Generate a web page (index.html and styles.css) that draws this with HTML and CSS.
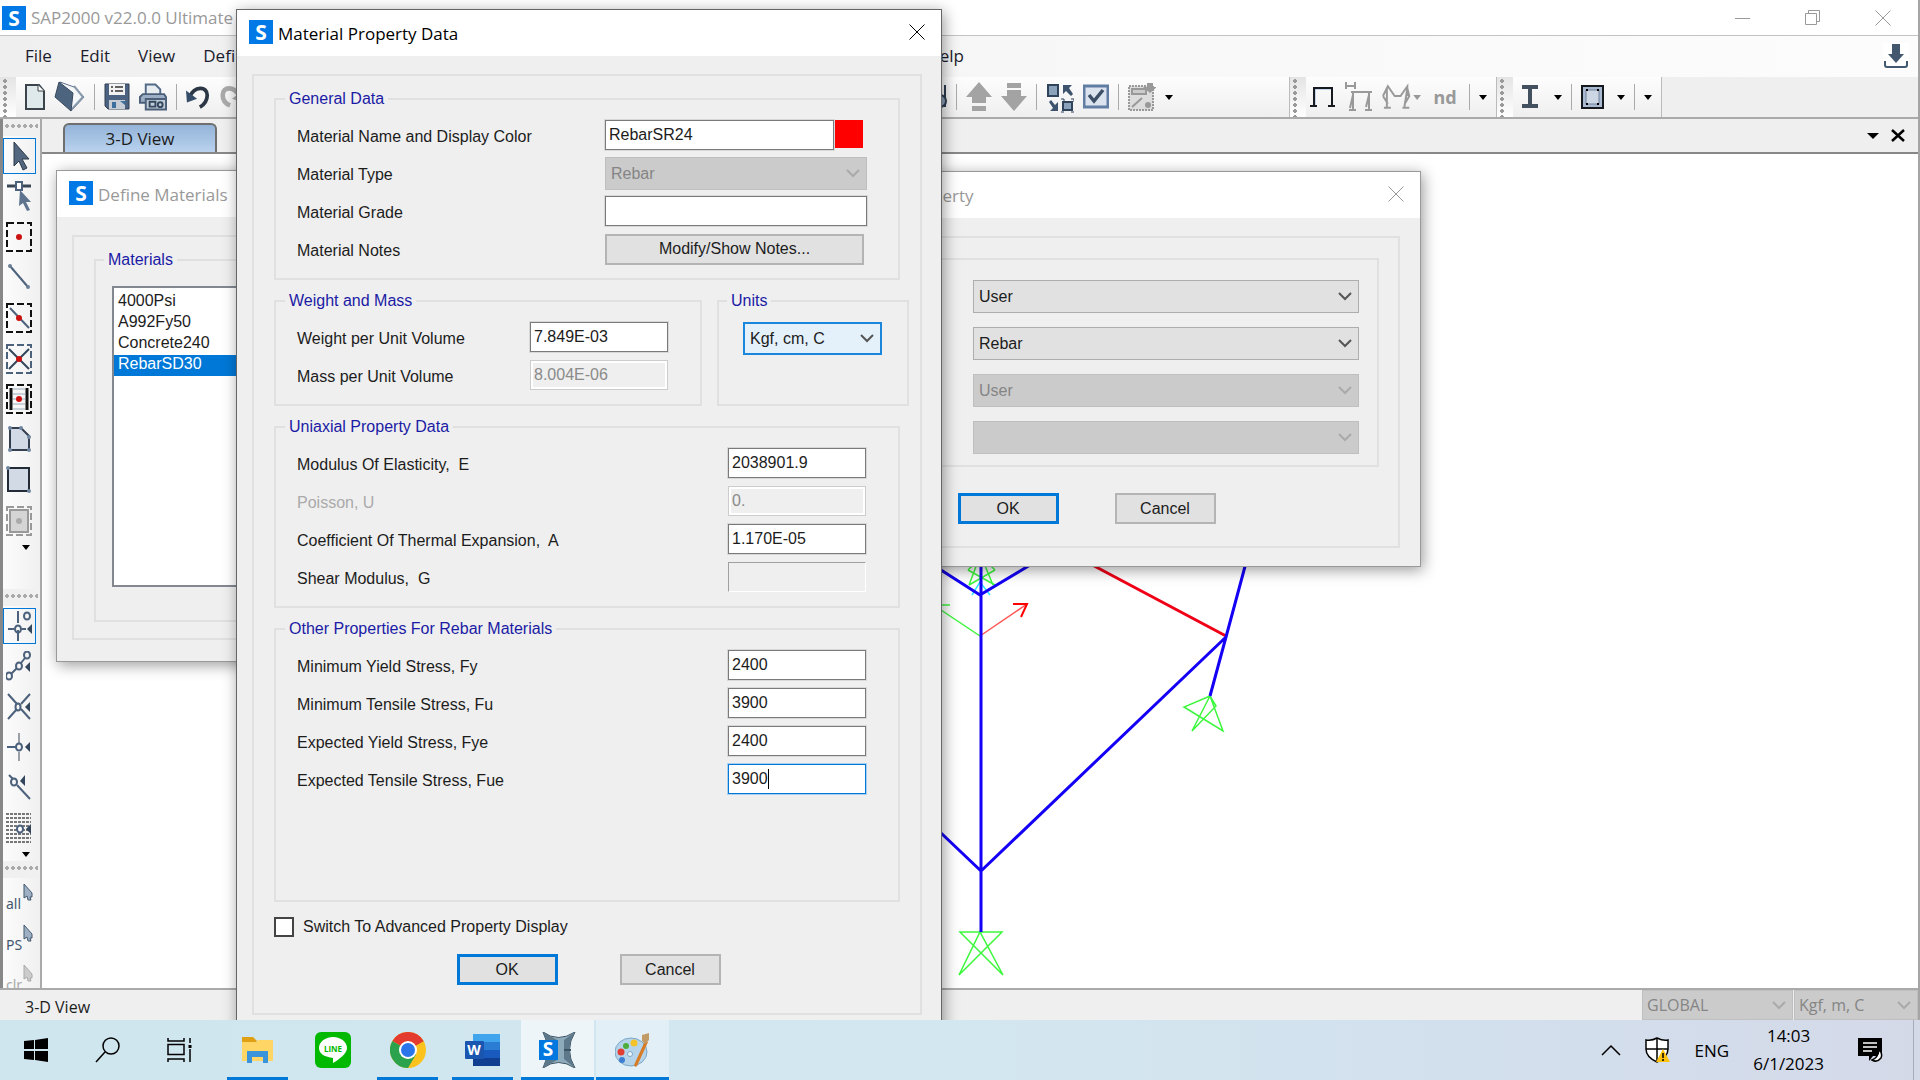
FILE: index.html
```html
<!DOCTYPE html>
<html lang="en">
<head>
<meta charset="utf-8">
<title>SAP2000 v22.0.0 Ultimate</title>
<link rel="stylesheet" href="styles.css">
</head>
<body>
  <div class="desktop">
    <section class="app">
      <header class="app-title">
        <span class="logo">S</span>
        <h1>SAP2000 v22.0.0 Ultimate</h1>
        <div class="window-buttons">
          <button aria-label="Minimize"><svg width="16" height="16"><path d="M0 8.5h15" /></svg></button>
          <button aria-label="Restore"><svg width="16" height="16"><path d="M.5 3.5h11v11H.5zM3.5 3V.5h11v11H12" /></svg></button>
          <button aria-label="Close"><svg width="16" height="16"><path d="M0.5 0.5l15 15M15.5 0.5l-15 15" /></svg></button>
        </div>
      </header>

      <nav class="menu">
        <a href="#">File</a>
        <a href="#">Edit</a>
        <a href="#">View</a>
        <a href="#">Define</a>
        <a href="#" class="menu-help">Help</a>
        <button class="download" aria-label="Download">
          <svg width="26" height="26"><path d="M9 1h8v10h4l-8 9-8-9h4z" fill="#43586f" /><path d="M2 18v4q0 2 2 2h18q2 0 2-2v-4" fill="none" stroke="#43586f" stroke-width="2" /></svg>
        </button>
      </nav>

      <div class="toolbars">
        <div class="strip strip-main">
          <span class="grip"></span>
          <button aria-label="New"><svg width="20" height="28" viewBox="0 0 20 28"><path d="M1 2h13l5 6v18H1z" fill="#dfe9ec" stroke="#3b444b" stroke-width="2" /><path d="M13 2v6h6" fill="#fff" stroke="#3b444b" /></svg></button>
          <button aria-label="Open"><svg width="31" height="32" viewBox="0 0 31 32"><path d="M6 1l14 5 10 10-13 14z" fill="#f4f7fa" stroke="#5a6f88" /><path d="M20 5l9 11-12 13" fill="none" stroke="#8798ab" stroke-width="2" /><path d="M5 1l14 11-2 18L1 16z" fill="#4d647f" stroke="#38495e" /></svg></button>
          <i class="sep"></i>
          <button aria-label="Save"><svg width="26" height="28" viewBox="0 0 26 28"><path d="M1 1h24v25H4l-3-3z" fill="#4b6280" stroke="#303f50" /><path d="M5 1h16v11H5z" fill="#f2f2f2" /><path d="M11 4h8M11 8h8M7 4h2M7 8h2" stroke="#333" stroke-width="1.5" /><path d="M5 17h16v9H5z" fill="#c6cdd5" /><path d="M8 19h4v6H8zM16 18h5v4z" fill="#3c6f9e" /></svg></button>
          <button aria-label="Print"><svg width="28" height="32" viewBox="0 0 29 32"><path d="M7 14V3h10l5 5v6" fill="#e7ecf1" stroke="#526a86" stroke-width="2" /><path d="M1 22v-6l3-3h22l2 3v6z" fill="#9baec3" stroke="#4b6078" stroke-width="2" /><path d="M7 18h21v11H7z" fill="#c2ccd6" stroke="#4b6078" stroke-width="2" /><path d="M11 21h6v5h-6z" fill="none" stroke="#33485f" stroke-width="2" /><circle cx="22" cy="24" r="2.500" fill="none" stroke="#33485f" stroke-width="2" /></svg></button>
          <i class="sep"></i>
          <button aria-label="Undo"><svg width="24" height="26" viewBox="0 0 26 28"><path d="M4 14C9 2 23 2 23 12q0 8-8 13" fill="none" stroke="#2b3744" stroke-width="4" /><path d="M0 7l1 13 11-4z" fill="#354d68" /></svg></button>
          <button aria-label="Redo"><svg width="24" height="26" viewBox="0 0 26 28"><path d="M22 13C17 2 4 2 4 12q0 8 8 11" fill="none" stroke="#aaa" stroke-width="5" /><path d="M26 7l-1 13-11-4z" fill="#aaa" /></svg></button>
          <div class="strip-right">
            <button aria-label="Object view"><svg width="20" height="28" viewBox="0 0 20 28"><path d="M18 2v22" stroke="#2d3d50" stroke-width="2" /><circle cx="13" cy="18" r="6" fill="#8fa3bb" stroke="#2d3d50" stroke-width="2" /></svg></button>
            <i class="sep"></i>
            <button aria-label="Move up"><svg width="26" height="32" viewBox="0 0 26 32" fill="#a3a3a3"><path d="M13 1l13 15h-6v6H6v-6H0zM6 25h14v5H6z" /></svg></button>
            <button aria-label="Move down"><svg width="26" height="32" viewBox="0 0 26 32" fill="#a3a3a3"><path d="M6 2h14v5H6zM6 9h14v6h6L13 30 0 15h6z" /></svg></button>
            <i class="sep"></i>
            <button aria-label="Shrink objects"><svg width="28" height="32" viewBox="0 0 28 32"><path d="M2 4h10v11H2zM17 21h9v8h-9z" fill="#8ba2bd" stroke="#2f435a" stroke-width="2" /><path d="M15 18h3v3M25 18h3v3M15 31h3M25 31h3" stroke="#2f435a" fill="none" /><path d="M17 4h9l-3 3 4 6-2 2-5-5-3 3zM12 30H4l3-3-4-6 2-2 4 5 3-3z" fill="#3d536d" /></svg></button>
            <button aria-label="Set display options"><svg width="26" height="26" viewBox="0 0 26 26"><path d="M1 2h24v21H1z" fill="#dbe3ee" stroke="#617da4" stroke-width="3" /><path d="M6 11l5 6 9-11" fill="none" stroke="#3c4f66" stroke-width="3.500" /></svg></button>
            <i class="sep"></i>
            <button aria-label="Assign to group"><svg width="28" height="30" viewBox="0 0 28 30"><path d="M1 4h24v24H1z" fill="#ddd" stroke="#999" stroke-width="2" stroke-dasharray="2 1" /><path d="M4 7h14v5H4z" fill="#ccc" stroke="#999" stroke-width="2" /><path d="M4 25l10-9" stroke="#999" stroke-width="2" /><path d="M19 1h6v4h4l-7 6-7-6h4z" fill="#999" /><circle cx="20" cy="23" r="3" fill="#999" /></svg></button>
            <button aria-label="More"><svg width="8" height="5"><path d="M0 0h8L4 5z" /></svg></button>
          </div>
        </div>
        <div class="strip">
          <span class="grip"></span>
          <button aria-label="Undeformed shape"><svg width="26" height="24" viewBox="0 0 26 24"><path d="M5 20V4h17v16" fill="none" stroke="#8eb4df" /><path d="M0 21h7M18 21h7M4 21V3h18v18" fill="none" stroke="#171b20" stroke-width="2" /></svg></button>
          <button aria-label="Show loads"><svg width="28" height="32" viewBox="0 0 28 32" fill="none" stroke="#999" stroke-width="2"><path d="M1 1v7M10 1v7M1 5h9M6 11h21M8 11v17M4 29h7M8 14l-3 13M24 11v17M20 29h7M24 14l-3 12" /></svg></button>
          <button aria-label="Deformed shape"><svg width="39" height="28" viewBox="0 0 40 28"><path d="M1 13L6 3l7 10h6l7-10v10M5 5v19M2 25h7M26 5l-3 19M21 25h7M1 13l5 8M26 5l2 8-4 7" fill="none" stroke="#999" stroke-width="2" /><path d="M32 12h8l-4 5z" fill="#999" /></svg></button>
          <button class="nd">nd</button>
          <i class="sep"></i>
          <button aria-label="More"><svg width="8" height="5"><path d="M0 0h8L4 5z" /></svg></button>
        </div>
        <div class="strip">
          <span class="grip"></span>
          <button class="frame-button" aria-label="Frame section"><svg width="40" height="24" viewBox="0 0 40 24"><path d="M0 2h16M0 21h16M8 2v19" stroke="#43505f" stroke-width="4" /><path d="M32 10h8l-4 5z" /></svg></button>
          <i class="sep"></i>
          <button aria-label="Concrete section"><svg width="44" height="26" viewBox="0 0 44 26"><path d="M1 2h21v22H1z" fill="#a9bad2" stroke="#15191e" stroke-width="2" /><path d="M5 6h13v14H5z" fill="#ccd6e4" stroke="#71839b" /><path d="M5 5h2v2H5zM16 5h2v2h-2zM5 19h2v2H5zM16 19h2v2h-2zM36 11h8l-4 5z" /></svg></button>
          <i class="sep"></i>
          <button aria-label="More"><svg width="8" height="5"><path d="M0 0h8L4 5z" /></svg></button>
        </div>
      </div>

      <div class="work">
        <aside class="side">
          <span class="side-grip"></span>
          <div class="side-group side-draw">
            <button class="on" aria-label="Select"><svg width="26" height="30" viewBox="0 0 26 30"><path d="M7 1l15 17h-7l5 9-4 2-4-9-5 5z" fill="#52667f" stroke="#2d3a4a" /></svg></button>
            <button aria-label="Reshape"><svg width="26" height="30" viewBox="0 0 26 30"><path d="M1 5h24" stroke="#3a4655" stroke-width="3" /><path d="M10 1h6v8h-6z" fill="#fff" stroke="#4c617b" stroke-width="2" /><path d="M14 9l11 12h-5l4 8-3 1-4-8-4 3z" fill="#5d738e" /></svg></button>
            <button aria-label="Draw joint"><svg width="26" height="30" viewBox="0 0 26 30"><path d="M1 1h24v28H1z" class="dash" /><circle cx="13" cy="15" r="3" fill="#c11" /></svg></button>
            <button aria-label="Draw frame"><svg width="26" height="30" viewBox="0 0 26 30"><path d="M4 4l18 21" stroke="#4c617b" stroke-width="2" /><circle cx="4" cy="4" r="2" fill="#6b7f98" /><circle cx="22" cy="25" r="2" fill="#6b7f98" /></svg></button>
            <button aria-label="Quick draw frame"><svg width="26" height="30" viewBox="0 0 26 30"><path d="M1 1h24v28H1z" class="dash" /><path d="M4 5l19 20" stroke="#4c617b" stroke-width="2" /><circle cx="13" cy="15" r="3" fill="#c11" /></svg></button>
            <button aria-label="Quick draw braces"><svg width="26" height="30" viewBox="0 0 26 30"><path d="M1 1h24v28H1z" class="dash blue" /><path d="M3 5l20 20M23 5L3 25" stroke="#33465c" stroke-width="2" /><circle cx="13" cy="15" r="3" fill="#c11" /></svg></button>
            <button aria-label="Quick draw beams"><svg width="26" height="30" viewBox="0 0 26 30"><path d="M1 1h24v28H1z" class="dash" /><path d="M5 4v22M21 4v22" stroke="#111" stroke-width="3" /><path d="M7 5h12M7 10h12M7 15h12M7 20h12M7 25h12" stroke="#9aaabd" /><circle cx="13" cy="15" r="3" fill="#c11" /></svg></button>
            <button aria-label="Draw poly area"><svg width="26" height="30" viewBox="0 0 26 30"><path d="M4 3h11l8 8v14H4z" fill="#d2dae5" stroke="#333f4e" stroke-width="2" /><g fill="#71869f"><circle cx="4" cy="3" r="2" /><circle cx="15" cy="3" r="2" /><circle cx="23" cy="12" r="2" /><circle cx="4" cy="25" r="2" /><circle cx="23" cy="25" r="2" /></g></svg></button>
            <button aria-label="Draw rectangle"><svg width="26" height="30" viewBox="0 0 26 30"><path d="M2 3h21v23H2z" fill="#d2dae5" stroke="#222b36" stroke-width="2" /><circle cx="2" cy="3" r="2" fill="#71869f" /><circle cx="23" cy="26" r="2" fill="#71869f" /></svg></button>
            <button aria-label="Quick draw area"><svg width="26" height="30" viewBox="0 0 26 30"><path d="M1 1h24v28H1z" class="dash gray" /><path d="M4 4h18v22H4z" fill="#d5d5d5" stroke="#999" stroke-width="2" /><circle cx="13" cy="15" r="3" fill="#aaa" /></svg></button>
          </div>
          <button class="side-more" aria-label="More"><svg width="8" height="5"><path d="M0 0h8L4 5z" /></svg></button>
          <span class="side-grip side-gap"></span>
          <div class="side-group side-snap">
            <button class="on" aria-label="Snap to points"><svg width="26" height="30" viewBox="0 0 26 30" class="snap"><path d="M11 0v12M11 19v11M1 18h6M15 18h4" /><ellipse cx="11" cy="18" rx="3" ry="3.500" /><ellipse cx="20" cy="5" rx="3" ry="3.500" /><path d="M25 13v10l-5-5z" class="tip" /></svg></button>
            <button aria-label="Snap to ends"><svg width="26" height="30" viewBox="0 0 26 30" class="snap"><path d="M5 23l6-6M15 12l4-5" /><ellipse cx="3" cy="25" rx="3" ry="3.500" /><ellipse cx="13" cy="15" rx="3" ry="3.500" /><ellipse cx="21" cy="4" rx="3" ry="3.500" /><path d="M24 11v10l-5-5z" class="tip" /></svg></button>
            <button aria-label="Snap to intersections"><svg width="26" height="30" viewBox="0 0 26 30" class="snap"><path d="M2 2l9 10M15 17l9 10M24 2l-9 10M11 17L2 27" /><ellipse cx="12" cy="15" rx="2.500" ry="3.500" /><path d="M24 10v10l-5-5z" class="tip" /></svg></button>
            <button aria-label="Snap to perpendicular"><svg width="26" height="30" viewBox="0 0 26 30" class="snap"><path d="M13 1v10M13 20v9" stroke="#9aa0a6" /><path d="M1 15h10" /><ellipse cx="13" cy="15" rx="3" ry="3.500" /><path d="M24 10v10l-5-5z" class="tip" /></svg></button>
            <button aria-label="Snap to lines"><svg width="26" height="30" viewBox="0 0 26 30" class="snap"><path d="M3 3l4 4M11 13l13 14" /><ellipse cx="8" cy="10" rx="3" ry="3.500" /><path d="M19 3v11l-5-5z" class="tip" /></svg></button>
            <button aria-label="Snap to fine grid"><svg width="26" height="30" viewBox="0 0 26 30" class="snap"><path d="M0 1h25M0 5h25M0 9h25M0 13h25M0 17h25M0 21h25M0 25h25M0 29h25" stroke="#777" stroke-dasharray="3 1" /><ellipse cx="14" cy="16" rx="3" ry="3.500" fill="#fff" /><path d="M25 11v10l-5-5z" class="tip" /></svg></button>
          </div>
          <button class="side-more" aria-label="More"><svg width="8" height="5"><path d="M0 0h8L4 5z" /></svg></button>
          <span class="side-grip"></span>
          <div class="side-group side-select">
            <button>all<svg width="10" height="18" viewBox="0 0 10 18"><path d="M1 1l8 9v4H7l1 3H5l-1-4-3 2z" fill="#9fb0c4" stroke="#43586f" /></svg></button>
            <button>PS<svg width="10" height="18" viewBox="0 0 10 18"><path d="M1 1l8 9v4H7l1 3H5l-1-4-3 2z" fill="#9fb0c4" stroke="#43586f" /></svg></button>
            <button disabled>clr<svg width="10" height="18" viewBox="0 0 10 18"><path d="M1 1l8 9v4H7l1 3H5l-1-4-3 2z" fill="#ccc" stroke="#aaa" /></svg></button>
          </div>
        </aside>

        <main class="view">
          <div class="tabs">
            <button class="tab">3-D View</button>
            <div class="tab-tools">
              <button aria-label="View list"><svg width="12" height="6"><path d="M0 0h12L6 6z" /></svg></button>
              <button aria-label="Close view"><svg width="14" height="13"><path d="M1 1l12 11M13 1L1 12" stroke="#000" stroke-width="2.500" /></svg></button>
            </div>
          </div>
          <svg class="model">
            <g transform="translate(-42 -154)" fill="none">
              <g stroke="#3cf73c" stroke-width="1.500">
                <path d="M968 570l27 15M995 570l-26 15M968 570l8-8M995 570l-8-8M980 556l-11 29M981 556l12 29" />
                <path d="M980 636l-39-26M932 605h18" />
                <path d="M960 932h42l-43 43 21-43 23 43z" />
                <path d="M1210 696l-26 11 39 24-13-35-18 35 24-25z" />
              </g>
              <path d="M972 595l8-13 10 13" stroke="#2ee6ff" stroke-width="1.500" />
              <path d="M980 636l47-32" stroke="#f55" stroke-width="1.500" />
              <path d="M1013 604h14l-6 13" stroke="#f00" stroke-width="2" />
              <path d="M1083 560l143 76" stroke="#f00016" stroke-width="3" />
              <path d="M941 570l39 25 60-36M1247 559l-21 78-16 59M1226 637L981 871l-40-38M981 559v373" stroke="#1400f5" stroke-width="3" />
            </g>
          </svg>
        </main>
      </div>

      <footer class="status">
        <span>3-D View</span>
        <div class="status-selects">
          <select disabled aria-label="Coordinate system"><option>GLOBAL</option></select>
          <select disabled aria-label="Units"><option>Kgf, m, C</option></select>
        </div>
      </footer>
    </section>

    <section class="dialog define-materials">
      <header class="dialog-title"><span class="logo">S</span><h2>Define Materials</h2></header>
      <div class="panel">
        <fieldset>
          <legend>Materials</legend>
          <select size="14" class="list" aria-label="Materials">
            <option>4000Psi</option>
            <option>A992Fy50</option>
            <option>Concrete240</option>
            <option selected>RebarSD30</option>
          </select>
        </fieldset>
      </div>
    </section>

    <section class="dialog add-property">
      <header class="dialog-title">
        <span class="logo">S</span><h2>Add Material Property</h2>
        <button aria-label="Close"><svg width="16" height="16"><path d="M0.5 0.5l15 15M15.5 0.5l-15 15" /></svg></button>
      </header>
      <div class="panel">
        <div class="choices">
          <select aria-label="Region"><option>User</option></select>
          <select aria-label="Material type"><option>Rebar</option></select>
          <select aria-label="Standard" disabled><option>User</option></select>
          <select aria-label="Grade" disabled><option></option></select>
        </div>
        <div class="actions">
          <button class="btn default">OK</button>
          <button class="btn">Cancel</button>
        </div>
      </div>
    </section>

    <section class="dialog property-data">
      <header class="dialog-title">
        <span class="logo">S</span><h2>Material Property Data</h2>
        <button aria-label="Close"><svg width="16" height="16"><path d="M0.5 0.5l15 15M15.5 0.5l-15 15" /></svg></button>
      </header>
      <form class="panel">
        <fieldset class="rows wide">
          <legend>General Data</legend>
          <label for="name">Material Name and Display Color</label>
          <div class="name-field">
            <input type="text" id="name" value="RebarSR24">
            <button type="button" class="swatch" aria-label="Display color"></button>
          </div>
          <label for="type">Material Type</label>
          <select id="type" disabled><option>Rebar</option></select>
          <label for="grade">Material Grade</label>
          <input type="text" id="grade">
          <label for="notes">Material Notes</label>
          <button type="button" class="btn notes" id="notes">Modify/Show Notes...</button>
        </fieldset>

        <div class="pair">
          <fieldset class="rows">
            <legend>Weight and Mass</legend>
            <label for="weight">Weight per Unit Volume</label>
            <input type="text" id="weight" value="7.849E-03">
            <label for="mass">Mass per Unit Volume</label>
            <input type="text" id="mass" value="8.004E-06" disabled>
          </fieldset>
          <fieldset class="units">
            <legend>Units</legend>
            <select aria-label="Units" class="active"><option>Kgf, cm, C</option></select>
          </fieldset>
        </div>

        <fieldset class="rows">
          <legend>Uniaxial Property Data</legend>
          <label for="modulus">Modulus Of Elasticity,&nbsp; E</label>
          <input type="text" id="modulus" value="2038901.9">
          <label for="poisson" class="off">Poisson, U</label>
          <input type="text" id="poisson" value="0." disabled>
          <label for="thermal">Coefficient Of Thermal Expansion,&nbsp; A</label>
          <input type="text" id="thermal" value="1.170E-05">
          <label for="shear">Shear Modulus,&nbsp; G</label>
          <input type="text" id="shear" class="sunken" readonly>
        </fieldset>

        <fieldset class="rows tall">
          <legend>Other Properties For Rebar Materials</legend>
          <label for="fy">Minimum Yield Stress, Fy</label>
          <input type="text" id="fy" value="2400">
          <label for="fu">Minimum Tensile Stress, Fu</label>
          <input type="text" id="fu" value="3900">
          <label for="fye">Expected Yield Stress, Fye</label>
          <input type="text" id="fye" value="2400">
          <label for="fue">Expected Tensile Stress, Fue</label>
          <div class="caret-field">
            <input type="text" id="fue" class="active" value="3900">
            <i class="caret"></i>
          </div>
        </fieldset>

        <label class="check"><input type="checkbox"> Switch To Advanced Property Display</label>
        <div class="actions">
          <button type="button" class="btn default">OK</button>
          <button type="button" class="btn">Cancel</button>
        </div>
      </form>
    </section>
  </div>

  <footer class="taskbar">
    <button class="sys" aria-label="Start"><svg width="24" height="24"><path d="M0 3l10-1v9H0zM11 2l13-2v11H11zM0 13h10v9L0 21zM11 13h13v11l-13-2z" /></svg></button>
    <button class="sys" aria-label="Search"><svg width="26" height="26" fill="none" stroke="#000" stroke-width="1.500"><circle cx="16" cy="9" r="8" /><path d="M10 15L1 25" /></svg></button>
    <button class="sys" aria-label="Task view"><svg width="26" height="26" fill="none" stroke="#000" stroke-width="1.500"><path d="M1 1v3h16V1M1 7.500h16v10H1zM1 25v-3h16v3M23 1v5M23 12v13" /><path d="M21.500 8h3v3h-3z" fill="#000" stroke="none" /></svg></button>
    <div class="tasks">
      <button class="task open" aria-label="File Explorer"><svg width="34" height="28" viewBox="0 0 34 28"><path d="M1 1h11l4 4v5H1z" fill="#e0a013" /><path d="M1 6h14l2-2h15v21H1z" fill="#ffd566" /><path d="M6 15h21v12h-5v-6H11v6H6z" fill="#3a94dc" /><path d="M11 21h11v4H11z" fill="#ffd566" /></svg></button>
      <button class="task" aria-label="LINE"><svg width="36" height="36" viewBox="0 0 36 36"><rect width="36" height="36" rx="6" fill="#00b900" /><path d="M18 5c8 0 14 5 14 11 0 5-7 11-14 15v-5C10 25 4 22 4 16S10 5 18 5z" fill="#fff" /><text x="18" y="20" class="line-text">LINE</text></svg></button>
      <button class="task open" aria-label="Chrome"><svg width="36" height="36" viewBox="0 0 36 36"><circle cx="18" cy="18" r="18" fill="#fcc31e" /><path d="M18 18L2.400 9A18 18 0 0 1 33.600 9z" fill="#e33b2e" /><path d="M18 18L2.400 9A18 18 0 0 0 18 36l8-13.500z" fill="#2ba24c" /><path d="M18 9h15.600L18 18z" fill="#e33b2e" /><circle cx="18" cy="18" r="9" fill="#fff" /><circle cx="18" cy="18" r="7" fill="#2a75ea" /></svg></button>
      <button class="task open" aria-label="Word"><svg width="36" height="32" viewBox="0 0 36 32"><path d="M8 0h27v8H8z" fill="#41a5ee" /><path d="M8 8h27v8H8z" fill="#2b7cd3" /><path d="M8 16h27v8H8z" fill="#185abd" /><path d="M8 24h27v8H8z" fill="#103f91" /><rect y="7" width="19" height="18" rx="1" fill="#1a55b0" /><text x="9" y="21" class="word-text">W</text></svg></button>
      <button class="task current" aria-label="SAP2000"><svg width="38" height="36" viewBox="0 0 38 36"><path d="M4 0q15 11 32 0-11 18 0 36-17-11-32 0 9-18 0-36z" fill="#8eabbc" stroke="#3c5363" /><path d="M4 0l14 8v20L4 36q8-18 0-36zM36 0L25 8v19l11 9q-11-18 0-36z" fill="#5c788a" /><path d="M25 18h7" stroke="#3c5363" stroke-width="2" /><path d="M0 8h19v20H0z" fill="#0078e0" /><text x="9" y="24" class="sap-text">S</text></svg></button>
      <button class="task current lit" aria-label="Paint"><svg width="36" height="36" viewBox="0 0 36 36"><ellipse cx="16" cy="20" rx="16" ry="14" fill="#b5d4ea" stroke="#7ba8c9" /><circle cx="15" cy="22" r="2.500" fill="#edf5fb" stroke="#7ba8c9" /><circle cx="6" cy="20" r="3.500" fill="#e23f34" /><circle cx="11" cy="14" r="3" fill="#4bae3c" /><circle cx="19" cy="11" r="3.500" fill="#f5c328" /><circle cx="7" cy="28" r="3" fill="#3e7fd2" /><path d="M30 9l3 1-11 24q-2 2-3-1z" fill="#d77b24" /><path d="M27 3l7-2v7l-4 4-3-3z" fill="#c29a66" /></svg></button>
    </div>
    <div class="tray">
      <button aria-label="Show hidden icons"><svg width="20" height="14"><path d="M1 12l9-9 9 9" fill="none" stroke="#000" stroke-width="1.500" /></svg></button>
      <button aria-label="Security"><svg width="26" height="26"><path d="M12 1q6 3 11 2v9q0 8-11 13Q1 20 1 12V3q6 1 11-2z" fill="#fff" stroke="#000" stroke-width="1.500" /><path d="M12 1v24M1 12h22" stroke="#000" stroke-width="1.500" /><path d="M18 12l7 13H11z" fill="#fdc10f" /><path d="M18 16v5M18 22v2" stroke="#000" stroke-width="1.500" /></svg></button>
      <button>ENG</button>
      <button class="clock"><span>14:03</span><span>6/1/2023</span></button>
      <button class="notices" aria-label="Notifications"><svg width="26" height="26"><path d="M0 1h24v18h-9l-4 5v-5H0z" /><path d="M5 6h14M5 10h14M5 14h9" stroke="#fff" stroke-width="1.500" /><path d="M21 13q4 3 2 8-4 5-9 2 6-2 7-10z" fill="#fff" stroke="#000" stroke-width="1.500" /></svg></button>
      <i class="peek"></i>
    </div>
  </footer>
</body>
</html>
```
FILE: styles.css
```css
* {
    margin: 0;
    padding: 0;
    box-sizing: border-box;
}
body
{
    height: 100vh;
    display: flex;
    flex-direction: column;
    overflow: hidden;
    font-family: "Liberation Sans", Arial, sans-serif;
    font-size: 16px;
    color: #1c1c1c;
}
button
{
    border: none;
    background: none;
    font: inherit;
    color: inherit;
}
svg
{
    display: block;
}
h1, h2, .menu, .tab, .status, .taskbar
{
    font-family: "Open Sans", "Noto Sans", sans-serif;
    font-size: 17px;
    font-weight: normal;
}
.desktop
{
    flex: 1;
    min-height: 0;
    position: relative;
    overflow: hidden;
}

/* main window */
.app
{
    height: 100%;
    display: flex;
    flex-direction: column;
    background: #efefef;
    border-right: 2px solid #a5a5a5;
}
.app-title
{
    height: 36px;
    display: flex;
    align-items: center;
    gap: 5px;
    padding-left: 2px;
    background: #fff;
    border-bottom: 1px solid #c3c3c3;
    color: #999;
}
.logo
{
    width: 24px;
    height: 24px;
    flex: none;
    background: #0078e6;
    color: #fff;
    font: bold 21px/24px "Open Sans", sans-serif;
    text-align: center;
}
.window-buttons
{
    display: flex;
    margin-left: auto;
}
.window-buttons button
{
    width: 70px;
    height: 32px;
    display: grid;
    place-items: center;
}
.window-buttons svg, .dialog-title svg
{
    fill: none;
    stroke: currentColor;
}
.menu
{
    height: 41px;
    display: flex;
    align-items: center;
    gap: 28px;
    padding: 0 9px 2px 25px;
    background: linear-gradient(to right, #efefef, #f8f8f8 60%, #fcfcfc);
}
.menu a
{
    color: #1c1c2c;
    text-decoration: none;
}
.menu-help
{
    margin-left: 644px;
}
.download
{
    margin-left: auto;
    background: #fff;
}
.toolbars
{
    height: 42px;
    display: flex;
    border-bottom: 2px solid #aaa;
}
.strip
{
    display: flex;
    align-items: center;
    gap: 9px;
    padding-right: 9px;
    background: linear-gradient(#fdfdfd, #efefef);
    border-right: 1px solid #bbb;
}
.strip-main
{
    width: 1290px;
}
.strip-right
{
    display: flex;
    align-items: center;
    gap: 9px;
    margin-left: auto;
    margin-right: 107px;
}
.grip
{
    width: 16px;
    height: 40px;
    margin-right: -5px;
    background: radial-gradient(circle, #999 2px, transparent 2px) 1px 1px / 8px 6px repeat-y, linear-gradient(#e4e4e4, #fff);
}
.strip-main .grip
{
    margin-right: 0;
}
.frame-button
{
    margin-left: 5px;
}
.sep
{
    width: 1px;
    height: 26px;
    background: #aaa;
}
.nd
{
    width: 30px;
    color: #999;
    font: bold 18px "Noto Sans", sans-serif;
}
.work
{
    flex: 1;
    min-height: 0;
    display: flex;
}
.side
{
    width: 42px;
    flex: none;
    overflow: hidden;
    background: linear-gradient(to right, #fcfcfc, #f0f0f0);
    border-left: 3px solid #888;
    border-right: 2px solid #aaa;
}
.side-grip
{
    display: block;
    width: 35px;
    height: 17px;
    background: radial-gradient(circle, #aaa 2px, transparent 2px) 1px 3px / 6px 8px repeat-x, #f0f0f0;
}
.side-gap
{
    margin-top: 35px;
}
.side-group
{
    display: flex;
    flex-direction: column;
}
.side-draw
{
    height: 405px;
}
.side-snap
{
    height: 242px;
}
.side-select
{
    height: 121px;
}
.side-group button
{
    width: 32px;
    flex: 1;
    display: grid;
    place-items: center;
}
.side-group .on
{
    width: 33px;
    flex: 0 0 36px;
    margin: 2px 0;
    border: 1px solid #0078d7;
}
.side-select button
{
    display: flex;
    align-items: end;
    justify-content: space-between;
    padding: 0 2px 5px 3px;
    color: #43586f;
    font: 14px "Noto Sans", sans-serif;
}
.side-select svg
{
    margin-bottom: 12px;
}
.side-select button:disabled
{
    color: #aaa;
}
.side-more
{
    display: flex;
    width: 27px;
    height: 13px;
    justify-content: end;
    align-items: center;
}
.dash
{
    fill: none;
    stroke: #111;
    stroke-width: 2;
    stroke-dasharray: 7 3;
}
.dash.blue
{
    stroke: #4c617b;
}
.dash.gray
{
    stroke: #999;
}
.snap
{
    fill: none;
    stroke: #4c617b;
    stroke-width: 2;
}
.snap .tip
{
    fill: #33465c;
    stroke: none;
}
.view
{
    flex: 1;
    min-width: 0;
    display: flex;
    flex-direction: column;
    background: #fff;
}
.tabs
{
    height: 35px;
    display: flex;
    align-items: end;
    padding-left: 21px;
    background: #efefef;
    border-bottom: 2px solid #888;
}
.tab
{
    width: 154px;
    height: 29px;
    border: 2px solid #6f6f6f;
    border-bottom: none;
    border-radius: 6px 6px 0 0;
    background: linear-gradient(#94b4d9, #b9d2ee);
}
.tab-tools
{
    align-self: center;
    display: flex;
    align-items: center;
    gap: 12px;
    margin-left: auto;
    padding-right: 13px;
}
.model
{
    width: 100%;
    flex: 1;
    min-height: 0;
}
.status
{
    height: 32px;
    flex: none;
    display: flex;
    align-items: center;
    justify-content: space-between;
    padding-left: 25px;
    border-top: 2px solid #aaa;
    font-size: 16px;
}
.status > span
{
    padding-top: 3px;
}
.status-selects
{
    display: flex;
    gap: 1px;
}
.status select
{
    width: 151px;
    height: 30px;
    padding-left: 4px;
    font: 16px "Open Sans", sans-serif;
}
.status select + select
{
    width: 124px;
}

/* dialogs */
.dialog
{
    position: absolute;
    background: #efefef;
    border: 1px solid #999;
    box-shadow: 2px 3px 14px rgba(0, 0, 0, 0.4);
    padding: 0 15px 21px;
}
.dialog-title
{
    height: 46px;
    display: flex;
    align-items: center;
    gap: 5px;
    margin: 0 -15px 18px;
    padding: 0 16px 0 12px;
    background: #fff;
    color: #999;
}
.dialog-title .logo
{
    margin-top: -2px;
}
.dialog-title button
{
    margin-left: auto;
    margin-top: -2px;
}
.panel
{
    display: block;
    border: 2px solid #e0e0e0;
}
.define-materials
{
    left: 56px;
    top: 170px;
    width: 460px;
}
.define-materials .panel
{
    padding: 12px 20px 16px;
}
.define-materials fieldset
{
    padding: 16px 16px 33px;
}
.add-property
{
    left: 757px;
    top: 171px;
    width: 664px;
    padding-right: 20px;
    padding-bottom: 18px;
}
.add-property .dialog-title
{
    margin-right: -20px;
}
.add-property .panel
{
    padding: 20px 19px 22px;
}
.property-data
{
    left: 236px;
    top: 9px;
    width: 706px;
    padding-right: 19px;
    border-color: #666;
}
.property-data .dialog-title
{
    margin-right: -19px;
    color: #000;
}
.property-data .panel
{
    padding: 12px 20px 28px;
}
.choices
{
    display: flex;
    flex-direction: column;
    align-items: end;
    gap: 14px;
    margin-bottom: 26px;
    padding: 20px 18px 11px;
    border: 2px solid #e0e0e0;
}
.choices select
{
    width: 386px;
}
fieldset
{
    border: 2px solid #e0e0e0;
    min-width: 0;
}
legend
{
    margin-left: -12px;
    padding: 1px 4px 0;
    line-height: 20px;
    color: #1b1ba5;
}
.define-materials legend
{
    margin-left: -8px;
}
.units legend
{
    margin-left: -16px;
}
.list
{
    display: block;
    width: 100%;
    height: 301px;
    padding: 4px 0;
    border: 2px solid #828790;
    background: #fff;
    overflow: hidden;
    font: inherit;
}
.list option
{
    height: 21px;
    min-height: 21px;
    line-height: 21px;
    padding: 0 4px;
}
.list option:checked
{
    background: #0078d7 linear-gradient(#0078d7, #0078d7);
    color: #fff;
    -webkit-text-fill-color: #fff;
}
.rows
{
    display: grid;
    grid-template-columns: 1fr 138px;
    grid-auto-rows: 30px;
    align-items: center;
    gap: 8px;
    margin-bottom: 10px;
    padding: 11px 32px 14px 21px;
}
.rows.wide
{
    grid-template-columns: 1fr 262px;
    padding-right: 31px;
}
.rows.tall
{
    margin-bottom: 15px;
    padding-bottom: 106px;
}
.rows label
{
    padding-top: 3px;
}
.rows .off
{
    color: #aaa;
}
.pair
{
    width: calc(100% + 9px);
    display: grid;
    grid-template-columns: 428px 1fr;
    gap: 15px;
}
.units
{
    margin-bottom: 10px;
    padding: 11px 24px;
}
.units select
{
    width: 139px;
}
input[type="text"]
{
    width: 100%;
    height: 30px;
    padding: 0 3px;
    border: 1px solid #7a7a7a;
    outline: 1px solid #d8d8d8;
    outline-offset: 0;
    background: #fff;
    font: inherit;
    color: #1c1c1c;
}
input[type="text"]:disabled
{
    border-color: #ccc;
    background: #efefef;
    box-shadow: inset 0 0 0 2px #fff;
    outline: none;
    color: #8a8a8a;
}
input[type="text"].sunken
{
    border-color: #a0a0a0 #fff #fff #a0a0a0;
    background: #efefef;
    outline: none;
}
input[type="text"].active
{
    border-color: #0078d7;
    outline-color: #a9d0f0;
}
.name-field
{
    display: flex;
    gap: 1px;
}
.swatch
{
    width: 32px;
    height: 28px;
    flex: none;
    background: #f00;
    background-clip: content-box;
    padding-right: 4px;
}
select
{
    appearance: none;
    height: 33px;
    padding: 0 26px 0 5px;
    border: 1px solid #adadad;
    border-radius: 0;
    background: #e1e1e1 url("data:image/svg+xml,%3Csvg xmlns='http://www.w3.org/2000/svg' width='14' height='9'%3E%3Cpath d='M1 1l6 6 6-6' fill='none' stroke='%23555' stroke-width='2'/%3E%3C/svg%3E") no-repeat right 6px center;
    font: inherit;
    color: #1c1c1c;
    opacity: 1;
}
select:disabled
{
    border-color: #bfbfbf;
    background-color: #cbcbcb;
    background-image: url("data:image/svg+xml,%3Csvg xmlns='http://www.w3.org/2000/svg' width='14' height='9'%3E%3Cpath d='M1 1l6 6 6-6' fill='none' stroke='%23aaa' stroke-width='2'/%3E%3C/svg%3E");
    color: #858585;
    opacity: 1;
}
select.list
{
    background-image: none;
    background-color: #fff;
}
select.active
{
    border: 2px solid #1a86dc;
    background-color: #e4f1fb;
}
.caret-field
{
    position: relative;
}
.caret
{
    position: absolute;
    left: 40px;
    top: 5px;
    width: 1px;
    height: 20px;
    background: #000;
}
.btn
{
    height: 31px;
    width: 101px;
    border: 2px solid #b4b4b4;
    background: #e1e1e1;
}
.btn.default
{
    border: 3px solid #0078d7;
}
.btn.notes
{
    width: 259px;
}
.check
{
    display: flex;
    align-items: center;
    gap: 9px;
    height: 20px;
}
.check input
{
    appearance: none;
    width: 20px;
    height: 20px;
    border: 2px solid #444;
    background: #fff;
}
.actions
{
    display: flex;
    justify-content: center;
    gap: 62px;
}
.add-property .actions
{
    gap: 56px;
}
.check + .actions
{
    margin-top: 17px;
    padding-left: 3px;
}

/* taskbar */
.taskbar
{
    height: 60px;
    flex: none;
    display: flex;
    background: linear-gradient(to right, #cfe6ee, #d3e7f0 50%, #d2e0ed 75%, #d4d9e8);
    color: #000;
}
.sys
{
    width: 72px;
    display: grid;
    place-items: center;
}
.tasks
{
    display: flex;
    gap: 2px;
    padding-left: 5px;
}
.task
{
    width: 73px;
    display: grid;
    place-items: center;
}
.task.open
{
    background: linear-gradient(#0078d7, #0078d7) center bottom / 61px 3px no-repeat;
}
.task.current
{
    background: linear-gradient(#0078d7, #0078d7) bottom / 100% 3px no-repeat, #edf5f9;
}
.task.lit
{
    background-color: #e2eff6;
}
.line-text, .word-text, .sap-text
{
    font: bold 8px "Open Sans", sans-serif;
    fill: #00b900;
    text-anchor: middle;
}
.word-text
{
    font-size: 14px;
    fill: #fff;
}
.sap-text
{
    font-size: 19px;
    fill: #fff;
}
.tray
{
    display: flex;
    align-items: center;
    gap: 24px;
    margin-left: auto;
    padding-right: 6px;
}
.clock
{
    display: flex;
    flex-direction: column;
    margin-right: 10px;
    line-height: 28px;
}
.clock span
{
    align-self: center;
}
.notices
{
    margin-right: 5px;
}
.peek
{
    width: 1px;
    height: 60px;
    background: #a5adba;
}
```
